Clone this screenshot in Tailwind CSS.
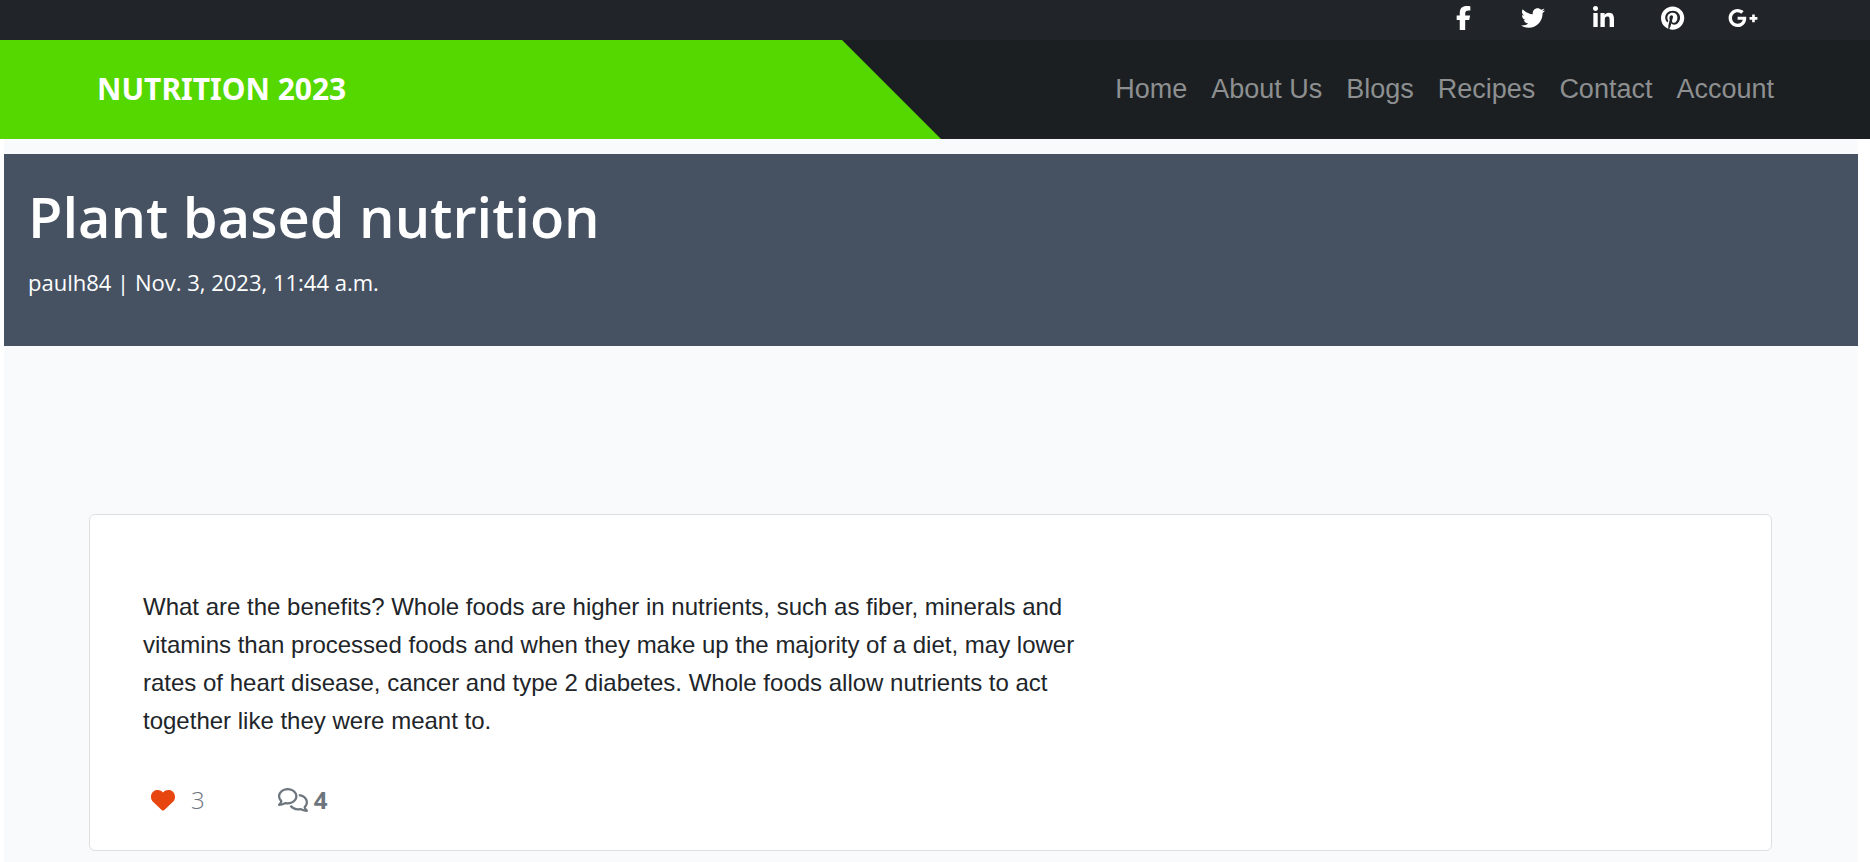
<!DOCTYPE html>
<html lang="en">
<head>
<meta charset="utf-8">
<title>Nutrition 2023</title>
<script src="https://cdn.jsdelivr.net/npm/@tailwindcss/browser@4"></script>
</head>
<body class="min-h-screen flex flex-col bg-white text-[#212529] font-['Liberation_Sans',Arial,sans-serif]">
<header>
  <div class="bg-[#212429] h-10 flex justify-end items-start pr-[92px] pt-1.5 text-white">
    <a href="#" aria-label="Facebook" class="w-[70px] flex justify-center"><svg class="h-6 w-auto" viewBox="0 0 320 512" fill="currentColor"><path d="M80 299.3V512H196V299.3h86.5l18-97.8H196V166.9c0-51.7 20.3-71.5 72.7-71.5c16.3 0 29.4 .4 37 1.2V7.9C291.4 4 256.4 0 236.2 0C129.3 0 80 50.5 80 159.4v42.1H14v97.8H80z"/></svg></a>
    <a href="#" aria-label="Twitter" class="w-[70px] flex justify-center"><svg class="h-6 w-auto" viewBox="0 0 512 512" fill="currentColor"><path d="M459.37 151.716c.325 4.548.325 9.097.325 13.645 0 138.72-105.583 298.558-298.558 298.558-59.452 0-114.68-17.219-161.137-47.106 8.447.974 16.568 1.299 25.34 1.299 49.055 0 94.213-16.568 130.274-44.832-46.132-.975-84.792-31.188-98.112-72.772 6.498.974 12.995 1.624 19.818 1.624 9.421 0 18.843-1.3 27.614-3.573-48.081-9.747-84.143-51.98-84.143-102.985v-1.299c13.969 7.797 30.214 12.67 47.431 13.319-28.264-18.843-46.781-51.005-46.781-87.391 0-19.492 5.197-37.36 14.294-52.954 51.655 63.675 129.3 105.258 216.365 109.807-1.624-7.797-2.599-15.918-2.599-24.04 0-57.828 46.782-104.934 104.934-104.934 30.213 0 57.502 12.67 76.67 33.137 23.715-4.548 46.456-13.32 66.599-25.34-7.798 24.366-24.366 44.833-46.132 57.827 21.117-2.273 41.584-8.122 60.426-16.243-14.292 20.791-32.161 39.308-52.628 54.253z"/></svg></a>
    <a href="#" aria-label="LinkedIn" class="w-[70px] flex justify-center"><svg class="h-6 w-auto" viewBox="0 0 448 512" fill="currentColor"><path d="M100.28 448H7.4V148.9h92.88zM53.79 108.1C24.09 108.1 0 83.5 0 53.8a53.79 53.79 0 0 1 107.58 0c0 29.7-24.1 54.3-53.79 54.3zM447.9 448h-92.68V302.4c0-34.7-.7-79.2-48.29-79.2-48.29 0-55.69 37.7-55.69 76.7V448h-92.78V148.9h89.08v40.8h1.3c12.4-23.5 42.69-48.3 87.88-48.3 94 0 111.28 61.9 111.28 142.3V448z"/></svg></a>
    <a href="#" aria-label="Pinterest" class="w-[70px] flex justify-center"><svg class="h-6 w-auto" viewBox="0 0 496 512" fill="currentColor"><path d="M496 256c0 137-111 248-248 248-25.6 0-50.2-3.9-73.4-11.1 10.1-16.5 25.2-43.5 30.8-65 3-11.6 15.4-59 15.4-59 8.1 15.4 31.7 28.5 56.8 28.5 74.8 0 128.7-68.8 128.7-154.3 0-81.9-66.9-143.2-152.9-143.2-107 0-163.9 71.8-163.9 150.1 0 36.4 19.4 81.7 50.3 96.1 4.7 2.2 7.2 1.2 8.3-3.3.8-3.4 5-20.3 6.9-28.1.6-2.5.3-4.7-1.7-7.1-10.1-12.5-18.3-35.3-18.3-56.6 0-54.7 41.4-107.6 112-107.6 60.9 0 103.6 41.5 103.6 100.9 0 67.1-33.9 113.6-78 113.6-24.3 0-42.6-20.1-36.7-44.8 7-29.5 20.5-61.3 20.5-82.6 0-19-10.2-34.9-31.4-34.9-24.9 0-44.9 25.7-44.9 60.2 0 22 7.4 36.8 7.4 36.8s-24.5 103.8-29 123.2c-5 21.4-3 51.6-.9 71.2C65.4 450.9 0 361.1 0 256 0 119 111 8 248 8s248 111 248 248z"/></svg></a>
    <a href="#" aria-label="Google Plus" class="w-[70px] flex justify-center"><svg class="h-6 w-auto" viewBox="0 0 640 512" fill="currentColor"><path d="M386.061 228.496c1.834 9.692 3.143 19.384 3.143 31.956C389.204 370.205 315.599 448 204.8 448c-106.084 0-192-85.915-192-192s85.916-192 192-192c51.864 0 95.083 18.859 128.611 50.292l-52.126 50.03c-14.145-13.621-39.028-29.599-76.485-29.599-65.484 0-118.92 54.221-118.92 121.277 0 67.056 53.436 121.277 118.92 121.277 75.961 0 104.513-54.745 108.965-82.773H204.8v-66.009h181.261zm185.406 6.437V179.2h-56.001v55.733h-55.733v56.001h55.733v55.733h56.001v-55.733H627.2v-56.001h-55.733z"/></svg></a>
  </div>
  <div class="bg-[#1b1f22] h-[99px] flex justify-between">
    <div class="w-[941px] bg-[#55d700] flex items-center pl-[97px] pb-0.5 [clip-path:polygon(0_0,842px_0,100%_100%,0_100%)]">
      <a href="#" class="text-white font-bold text-[30px] leading-10 font-['Comic_Sans_MS','Noto_Sans',sans-serif]">NUTRITION 2023</a>
    </div>
    <nav class="flex items-center gap-6 pr-24 pb-0.5 text-[27px] leading-10 text-[#8d8f90] whitespace-nowrap">
      <a href="#">Home</a><a href="#">About Us</a><a href="#">Blogs</a><a href="#">Recipes</a><a href="#">Contact</a><a href="#">Account</a>
    </nav>
  </div>
</header>
<main class="flex-1 ml-1 mr-3 pt-[15px] pb-[10px] bg-[#f9fafc]">
  <section class="bg-[#465262] text-white h-48 px-6 pt-7 font-['Segoe_UI','Open_Sans',sans-serif]">
    <h1 class="text-[56px] leading-[68px] font-semibold">Plant based nutrition</h1>
    <p class="text-[22px] leading-9 mt-3.5">paulh84 | Nov. 3, 2023, 11:44 a.m.</p>
  </section>
  <article class="mt-[168px] ml-[85px] mr-[86px] bg-white border border-[#dedfe0] rounded-md pl-[53px] pt-[73px] pb-8">
    <p class="text-2xl leading-[38px] max-w-[960px]">What are the benefits? Whole foods are higher in nutrients, such as fiber, minerals and vitamins than processed foods and when they make up the majority of a diet, may lower rates of heart disease, cancer and type 2 diabetes. Whole foods allow nutrients to act together like they were meant to.</p>
    <div class="flex items-center mt-[42px] h-9 pl-2 text-[#6c757d] text-2xl font-['Segoe_UI','Open_Sans',sans-serif]">
      <button type="button" aria-label="Like" class="text-[#e84610]"><svg class="size-6" viewBox="0 0 512 512" fill="currentColor"><path d="M47.6 300.4L228.3 469.1c7.5 7 17.4 10.9 27.7 10.9s20.2-3.9 27.7-10.9L464.4 300.4c30.4-28.3 47.6-68 47.6-109.5v-5.8c0-69.9-50.5-129.5-119.4-141C347 36.5 300.6 51.4 268 84L256 96 244 84c-32.6-32.6-79-47.5-124.6-39.9C50.5 55.6 0 115.2 0 185.1v5.8c0 41.5 17.2 81.2 47.6 109.5z"/></svg></button>
      <span class="ml-4 font-light">3</span>
      <svg class="ml-[73px] h-6 w-auto" viewBox="0 0 640 512" fill="currentColor"><path d="M88.2 309.1c9.8-18.3 6.8-40.8-7.5-55.8C59.4 230.9 48 204 48 176c0-63.5 63.8-128 160-128s160 64.5 160 128s-63.8 128-160 128c-13.1 0-25.8-1.3-37.8-3.6c-10.4-2-21.2-.6-30.7 4.2c-4.1 2.1-8.3 4.1-12.6 6c-16 7.2-32.9 13.5-49.9 18c2.8-4.6 5.4-9.1 7.9-13.6c1.1-1.9 2.2-3.9 3.2-5.9zM208 352c114.9 0 208-78.8 208-176S322.9 0 208 0S0 78.8 0 176c0 41.8 17.2 80.1 45.9 110.3c-.9 1.7-1.9 3.5-2.8 5.1c-10.3 18.4-22.3 36.5-36.6 52.1c-6.6 7-8.3 17.2-4.6 25.9C5.8 378.3 14.4 384 24 384c43 0 86.5-13.3 122.7-29.7c4.8-2.2 9.6-4.5 14.2-6.8c15.1 3 30.9 4.5 47.1 4.5zM432 480c16.2 0 31.9-1.6 47.1-4.5c4.6 2.3 9.4 4.6 14.2 6.8C529.5 498.7 573 512 616 512c9.6 0 18.2-5.7 22-14.5c3.8-8.8 2-19-4.6-25.9c-14.2-15.6-26.2-33.7-36.6-52.1c-.9-1.7-1.9-3.4-2.8-5.1C622.8 384.1 640 345.8 640 304c0-94.4-87.9-171.5-198.2-175.8c4.1 15.2 6.2 31.2 6.2 47.8l0 .6c87.2 6.7 144 67.5 144 127.4c0 28-11.4 54.9-32.7 77.2c-14.3 15-17.3 37.6-7.5 55.8c1.1 2 2.2 4 3.2 5.9c2.5 4.5 5.2 9 7.9 13.6c-17-4.5-33.9-10.7-49.9-18c-4.3-1.9-8.5-3.9-12.6-6c-9.5-4.8-20.3-6.2-30.7-4.2c-12.1 2.4-24.8 3.6-37.8 3.6c-61.7 0-110-26.5-136.8-62.3c-16 5.4-32.8 9.4-50 11.8C279 439.8 350 480 432 480z"/></svg>
      <strong class="ml-1.5 font-bold">4</strong>
    </div>
  </article>
</main>
</body>
</html>
